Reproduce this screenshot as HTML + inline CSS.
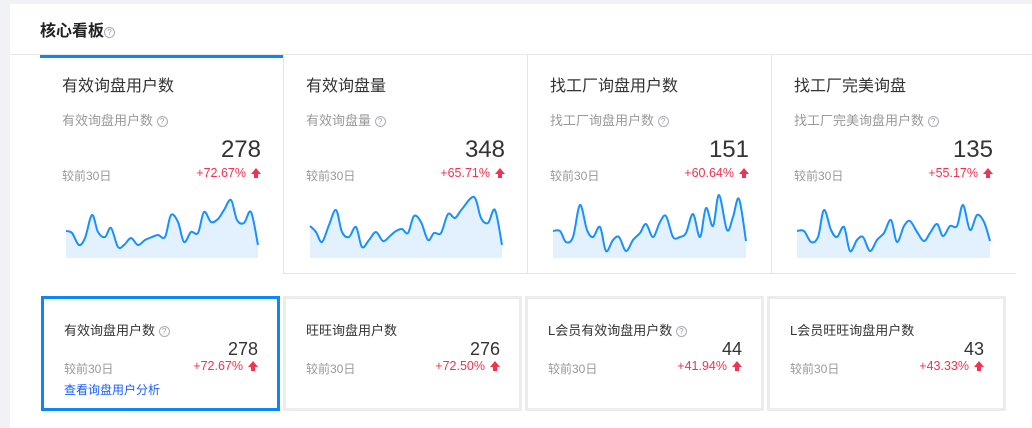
<!DOCTYPE html>
<html><head><meta charset="utf-8"><style>
*{margin:0;padding:0;box-sizing:border-box}
body{width:1032px;height:428px;background:#f0f2f5;font-family:"Liberation Sans","Noto Sans CJK SC",sans-serif;position:relative;overflow:hidden}
.panel{position:absolute;left:10px;top:4px;width:1022px;height:424px;background:#fff}
.hd{position:absolute;left:0;top:0;width:1022px;height:51px;border-bottom:1px solid #e8e8e8}
.hd b{position:absolute;left:30px;top:13px;font-size:16px;color:#222;font-weight:bold}
.q{display:inline-block;width:11px;height:11px;border:1px solid #aab;border-radius:50%;font-size:8px;line-height:9px;text-align:center;color:#99a;font-weight:normal;vertical-align:1px}
.abs{position:absolute}
.t1{font-size:16px;color:#333}
.t2{font-size:13px;color:#999}
.num{font-size:24px;color:#333;text-align:right}
.sm{font-size:12px;color:#999}
.pct{font-size:12.5px;color:#f0334f;text-align:right}
.arr{display:inline-block;width:0;height:0;border-left:5px solid transparent;border-right:5px solid transparent;border-bottom:6px solid #f0334f;position:relative;top:-3px;margin-left:5px}
.arr:after{content:"";position:absolute;left:-2px;top:5px;width:4px;height:5px;background:#f0334f}
.bc{position:absolute;top:296px;height:115px;border:3px solid #ececec}
.bt{font-size:13px;color:#333}
.bn{font-size:18px;color:#333;text-align:right}
</style></head><body>
<div class="panel">
<div class="hd"><b>核心看板<span class="q">?</span></b></div>
</div>
<div class="abs" style="left:40px;top:55px;width:243px;height:3px;background:#0a88f5"></div>
<div class="abs" style="left:283px;top:55px;width:1px;height:219px;background:#e4e4e4"></div>
<div class="abs" style="left:527px;top:55px;width:1px;height:219px;background:#e4e4e4"></div>
<div class="abs" style="left:771px;top:55px;width:1px;height:219px;background:#e4e4e4"></div>
<div class="abs" style="left:283px;top:273px;width:733px;height:1px;background:#e4e4e4"></div>
<div id="top"></div>
<svg class="abs" style="left:0;top:0" width="1032" height="428" id="sv"></svg>
<div class="bc" style="left:41px;width:239px;border-color:#0a88f5"></div>
<div class="bc" style="left:283px;width:239px"></div>
<div class="bc" style="left:525px;width:239px"></div>
<div class="bc" style="left:767px;width:239px"></div>
<div id="bot"></div>
<script>
var T=[["有效询盘用户数","有效询盘用户数","278","+72.67%"],["有效询盘量","有效询盘量","348","+65.71%"],["找工厂询盘用户数","找工厂询盘用户数","151","+60.64%"],["找工厂完美询盘","找工厂完美询盘用户数","135","+55.17%"]];
var h="";
T.forEach(function(t,i){var x=62+i*244;
h+='<div class="abs t1" style="left:'+x+'px;top:72px">'+t[0]+'</div>';
h+='<div class="abs t2" style="left:'+x+'px;top:110px">'+t[1]+' <span class="q">?</span></div>';
h+='<div class="abs num" style="left:'+(x)+'px;width:199px;top:136px">'+t[2]+'</div>';
h+='<div class="abs sm" style="left:'+x+'px;top:167px">较前30日</div>';
h+='<div class="abs pct" style="left:'+x+'px;width:199px;top:166px">'+t[3]+'<span class="arr"></span></div>';
});
document.getElementById("top").innerHTML=h;
var B=[["有效询盘用户数 <span class=\"q\">?</span>","278","+72.67%",1],["旺旺询盘用户数","276","+72.50%",0],["L会员有效询盘用户数 <span class=\"q\">?</span>","44","+41.94%",0],["L会员旺旺询盘用户数","43","+43.33%",0]];
h="";
B.forEach(function(t,i){var x=64+i*242;
h+='<div class="abs bt" style="left:'+x+'px;top:320px">'+t[0]+'</div>';
h+='<div class="abs bn" style="left:'+x+'px;width:194px;top:339px">'+t[1]+'</div>';
h+='<div class="abs sm" style="left:'+x+'px;top:360px">较前30日</div>';
h+='<div class="abs pct" style="left:'+x+'px;width:194px;top:359px">'+t[2]+'<span class="arr"></span></div>';
if(t[3])h+='<div class="abs" style="left:'+x+'px;top:381px;font-size:12px;color:#1a5cff">查看询盘用户分析</div>';
});
document.getElementById("bot").innerHTML=h;
var P=[
[[66,231],[72,233],[79,245],[85,238],[92,215],[98,232],[105,237],[111,228],[118,247],[124,245],[131,238],[138,245],[145,240],[152,237],[158,235],[165,237],[171,215],[178,222],[184,242],[191,232],[198,233],[204,212],[211,222],[218,219],[224,210],[231,200],[237,220],[244,223],[251,212],[258,245]],
[[310,226],[316,232],[322,242],[329,225],[336,210],[342,232],[349,237],[356,227],[362,247],[369,240],[376,232],[383,241],[390,236],[396,231],[402,229],[408,233],[414,216],[421,222],[428,240],[434,233],[441,233],[448,214],[455,218],[462,209],[474,197],[481,218],[488,223],[495,210],[502,245]],
[[553,231],[560,231],[566,242],[573,237],[580,205],[587,230],[593,237],[600,227],[606,251],[613,240],[619,237],[626,251],[633,240],[640,233],[646,224],[653,237],[660,222],[666,216],[673,237],[680,237],[686,233],[693,214],[700,237],[706,208],[713,226],[719,195],[727,230],[733,217],[739,199],[746,241]],
[[797,231],[804,231],[811,242],[818,237],[824,210],[831,230],[837,237],[844,227],[850,251],[857,240],[863,237],[870,251],[877,240],[884,233],[891,220],[897,242],[904,226],[910,221],[917,232],[924,241],[930,233],[937,224],[943,236],[950,226],[957,226],[963,205],[970,230],[977,215],[984,222],[990,241]]];
var s="";
P.forEach(function(p){var d="M"+p[0][0]+","+p[0][1];
for(var i=0;i<p.length-1;i++){var a=p[i-1]||p[i],b=p[i],c=p[i+1],e=p[i+2]||c;
d+=" C"+(b[0]+(c[0]-a[0])/6).toFixed(1)+","+(b[1]+(c[1]-a[1])/6).toFixed(1)+" "+(c[0]-(e[0]-b[0])/6).toFixed(1)+","+(c[1]-(e[1]-b[1])/6).toFixed(1)+" "+c[0]+","+c[1];}
var L=p[p.length-1][0],F=p[0][0];
s+='<path d="'+d+' L'+L+',258 L'+F+',258Z" fill="#e3f1fe"/><path d="'+d+'" fill="none" stroke="#1890ff" stroke-width="2"/>';});
document.getElementById("sv").innerHTML=s;
</script>
</body></html>
